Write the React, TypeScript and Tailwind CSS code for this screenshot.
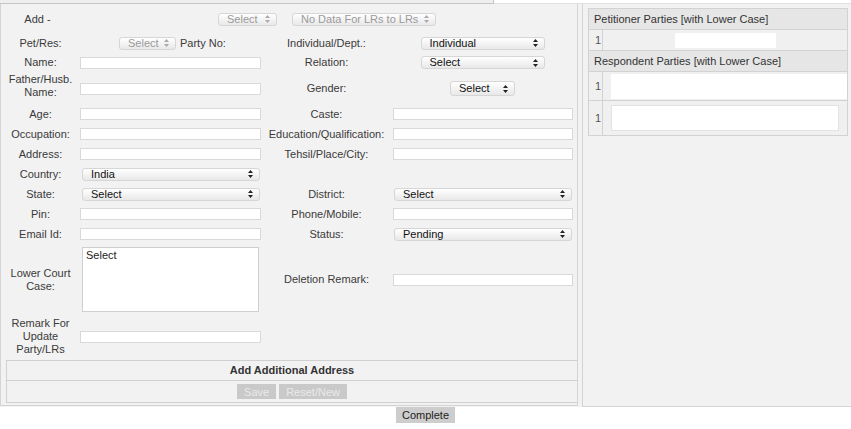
import React from 'react';

const labelCls = 'text-center text-[11px] leading-[13px] text-[#3a3a3a]';

function Arrows({ dim }: { dim?: boolean }) {
  return (
    <svg width="5" height="8" viewBox="0 0 5 8" className={dim ? 'fill-[#aaa]' : 'fill-[#222]'}>
      <path d="M2.5 0L5 3H0z M2.5 8L0 5h5z" />
    </svg>
  );
}

function Select({ text, className = '', dim }: { text: string; className?: string; dim?: boolean }) {
  return (
    <div
      className={`flex h-[13px] items-center justify-between rounded-[3px] border border-[#d6d6d6] bg-linear-to-b from-white to-[#e8e8e8] pl-[8px] pr-[6px] text-[11px] leading-none ${
        dim ? 'text-[#9a9a9a]' : 'text-[#111]'
      } ${className}`}
    >
      <span>{text}</span>
      <Arrows dim={dim} />
    </div>
  );
}

function Input({ className = '' }: { className?: string }) {
  return <div className={`h-[12px] border border-[#d9d9d9] bg-white ${className}`} />;
}

function Row({
  h,
  l1,
  f1,
  l2,
  f2,
}: {
  h: string;
  l1?: React.ReactNode;
  f1?: React.ReactNode;
  l2?: React.ReactNode;
  f2?: React.ReactNode;
}) {
  return (
    <div className={`flex items-center ${h}`}>
      <div className={`w-[79px] ${labelCls}`}>{l1}</div>
      <div className="w-[182px]">{f1}</div>
      <div className={`w-[129px] ${labelCls}`}>{l2}</div>
      <div className="w-[183px]">{f2}</div>
    </div>
  );
}

function PartyTable() {
  return (
    <table className="w-[260px] border-collapse text-[11px] leading-none text-[#333]">
      <tbody>
        <tr className="h-[21px] bg-[#e6e6e6]">
          <td colSpan={2} className="border border-[#d2d2d2] pl-[5px]">
            Petitioner Parties [with Lower Case]
          </td>
        </tr>
        <tr className="h-[21px] bg-[#f0f0f0]">
          <td className="w-[18px] border border-[#d2d2d2] pl-[6px] text-[#555]">1</td>
          <td className="border border-[#d2d2d2]">
            <div className="mx-auto h-[15px] w-[101px] bg-white" />
          </td>
        </tr>
        <tr className="h-[21px] bg-[#e6e6e6]">
          <td colSpan={2} className="border border-[#d2d2d2] pl-[5px]">
            Respondent Parties [with Lower Case]
          </td>
        </tr>
        <tr className="h-[29px] bg-[#f0f0f0]">
          <td className="border border-[#d2d2d2] pl-[6px] text-[#555]">1</td>
          <td className="border border-[#d2d2d2] pl-[8px]">
            <div className="h-[25px] w-[236px] bg-white" />
          </td>
        </tr>
        <tr className="h-[35px] bg-[#f0f0f0]">
          <td className="border border-[#d2d2d2] pl-[6px] text-[#555]">1</td>
          <td className="border border-[#d2d2d2] pl-[8px]">
            <div className="h-[26px] w-[228px] border border-[#e2e2e2] bg-white" />
          </td>
        </tr>
      </tbody>
    </table>
  );
}

export default function App() {
  return (
    <div className="min-h-[429px] w-[851px] bg-white font-['Liberation_Sans',Arial,sans-serif]">
      <div className="flex h-[4px]">
        <div className="w-[494px] border-r border-b border-[#c6c6c6] bg-[#eeeeee]" />
        <div className="flex-1 border-b border-[#e0e0e0] bg-white" />
      </div>

      <div className="flex items-start bg-[#f2f2f2]">
        <div className="h-[402px] w-[578px] border-r border-b border-l border-[#d4d4d4]">
          <div className="flex h-[30px] items-center">
            <div className={`w-[79px] ${labelCls} pr-[6px]`}>Add -</div>
            <Select text="Select" dim className="ml-[138px] w-[59px]" />
            <Select text="No Data For LRs to LRs" dim className="ml-[15px] w-[144px]" />
          </div>
          <div className="flex h-[18px] items-center">
            <div className={`w-[79px] ${labelCls}`}>Pet/Res:</div>
            <Select text="Select" dim className="ml-[39px] w-[57px]" />
            <span className="ml-[4px] w-[82px] text-[11px] text-[#3a3a3a]">Party No:</span>
            <div className={`w-[129px] ${labelCls}`}>Individual/Dept.:</div>
            <div className="w-[183px]">
              <Select text="Individual" className="mx-auto w-[124px]" />
            </div>
          </div>
          <Row
            h="h-[21px]"
            l1="Name:"
            f1={<Input className="w-[181px]" />}
            l2="Relation:"
            f2={<Select text="Select" className="mx-auto w-[124px]" />}
          />
          <Row
            h="h-[31px]"
            l1={
              <div className="mb-[6px]">
                Father/Husb.
                <br />
                Name:
              </div>
            }
            f1={<Input className="w-[181px]" />}
            l2="Gender:"
            f2={<Select text="Select" className="mx-auto h-[15px] w-[65px]" />}
          />
          <Row
            h="h-[20px]"
            l1="Age:"
            f1={<Input className="w-[181px]" />}
            l2="Caste:"
            f2={<Input className="ml-[2px] w-[180px]" />}
          />
          <Row
            h="h-[20px]"
            l1="Occupation:"
            f1={<Input className="w-[181px]" />}
            l2="Education/Qualification:"
            f2={<Input className="ml-[2px] w-[180px]" />}
          />
          <Row
            h="h-[20px]"
            l1="Address:"
            f1={<Input className="w-[181px]" />}
            l2="Tehsil/Place/City:"
            f2={<Input className="ml-[2px] w-[180px]" />}
          />
          <Row h="h-[20px]" l1="Country:" f1={<Select text="India" className="ml-[2px] w-[178px]" />} />
          <Row
            h="h-[20px]"
            l1="State:"
            f1={<Select text="Select" className="ml-[2px] w-[178px]" />}
            l2="District:"
            f2={<Select text="Select" className="ml-[3px] w-[178px]" />}
          />
          <Row
            h="h-[20px]"
            l1="Pin:"
            f1={<Input className="w-[181px]" />}
            l2="Phone/Mobile:"
            f2={<Input className="ml-[2px] w-[180px]" />}
          />
          <Row
            h="h-[20px]"
            l1="Email Id:"
            f1={<Input className="w-[181px]" />}
            l2="Status:"
            f2={<Select text="Pending" className="ml-[3px] w-[178px]" />}
          />
          <Row
            h="h-[71px]"
            l1={
              <>
                Lower Court
                <br />
                Case:
              </>
            }
            f1={
              <div className="ml-[2px] h-[65px] w-[177px] border border-[#cfcfcf] bg-white px-[3px] pt-[1px] text-[11px] leading-[13px] text-[#222]">
                Select
              </div>
            }
            l2="Deletion Remark:"
            f2={<Input className="ml-[2px] w-[180px]" />}
          />
          <Row
            h="h-[43px]"
            l1={
              <>
                Remark For
                <br />
                Update
                <br />
                Party/LRs
              </>
            }
            f1={<Input className="w-[181px]" />}
          />
          <div className="mt-[2px] ml-[5px] border-t border-b border-l border-[#d0d0d0]">
            <div className="flex h-[20px] items-center justify-center border-b border-[#d0d0d0] text-[11px] font-bold text-[#333]">
              Add Additional Address
            </div>
            <div className="flex h-[21px] items-center justify-center gap-[3px] text-[11px]">
              <button className="h-[15px] bg-[#c9c9c9] px-[7px] text-[#e9e9e9]">Save</button>
              <button className="h-[15px] bg-[#c9c9c9] px-[7px] text-[#e9e9e9]">Reset/New</button>
            </div>
          </div>
        </div>

        <div className="ml-[4px] h-[403px] flex-1 border-b border-l border-[#d4d4d4] pt-[4px] pl-[5px]">
          <PartyTable />
        </div>
      </div>

      <div className="flex justify-center">
        <button className="h-[16px] bg-[#cdcdcd] px-[6px] text-[11px] leading-none text-[#222]">Complete</button>
      </div>
    </div>
  );
}
